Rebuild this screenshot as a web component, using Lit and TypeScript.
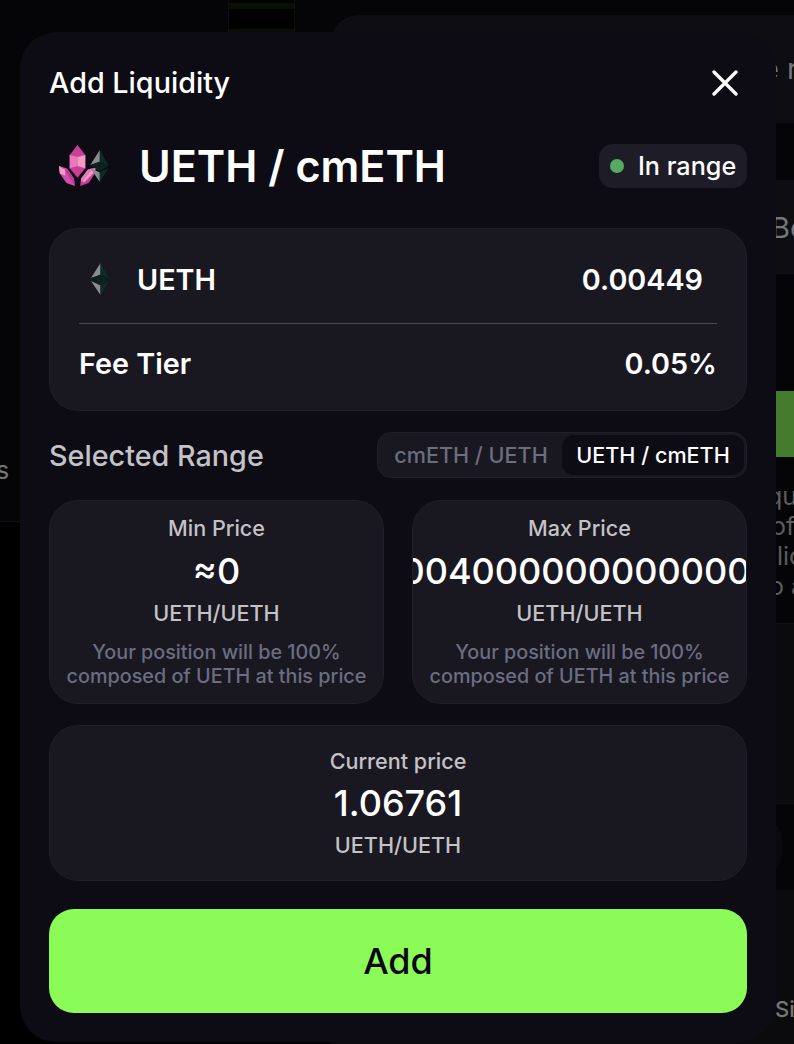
import { LitElement, html, css, svg } from "lit";
import { customElement } from "lit/decorators.js";

const diamond = svg`
  <polygon points="9.5,0 0,15 9.5,12" fill="#8b8c8d"/>
  <polygon points="9.5,0 18.5,15.5 9.5,12" fill="#0e2b27"/>
  <polygon points="0,15 9.5,11.5 18.5,15.5 9.5,21.5" fill="#0b211e"/>
  <polygon points="0,18 9.5,22.5 9.5,32" fill="#8b8c8d"/>
  <polygon points="9.5,22.5 18.5,18 9.5,32" fill="#0e2b27"/>`;

@customElement("pool-backdrop")
export class PoolBackdrop extends LitElement {
  static styles = css`
    :host { display: grid; grid-template-columns: 330px 1fr; height: 1044px; overflow: hidden; background: #000; color: #767678; font-size: 29px; line-height: 35px; }
    .left { display: flex; flex-direction: column; height: 521px; border-bottom: 1px solid #101013; background: #050507; }
    .candles { width: 65px; height: 100px; margin-left: 228px; border: solid #0e0e10; border-width: 0 1px; background: linear-gradient(#010101 3px, #081006 3px, #081006 9px, #010101 9px, #010101 29px, #081006 29px); }
    .foot { margin: 353px 0 0 -4px; font-size: 25px; }
    .right { display: flex; flex-direction: column; padding-top: 15px; background: #050507; }
    .box { background: #0e0e12; flex: none; box-sizing: border-box; padding-left: 432px; white-space: nowrap; }
    .one { height: 108px; border-radius: 29px 0 0 0; padding-top: 36px; }
    .two { height: 94px; margin-top: 57px; padding: 30px 0 0 441px; }
    .green { height: 66px; margin-top: 117px; background: #447b2c; flex: none; }
    .note { margin-top: 24px; height: 142px; padding-left: 439px; font-size: 25px; line-height: 30px; color: #5c5c5f; white-space: nowrap; box-sizing: border-box; flex: none; }
    .note div { height: 30px; }
    .three { height: 181px; background: #0b0b0e; border: solid #111114; border-width: 1px 0; }
    .pill { width: 452px; height: 50px; border-radius: 15px; background: #0a0a0d; margin: 18px 0; flex: none; }
    .four { height: 160px; background: #0b0b0e; padding: 102px 0 0 445px; font-size: 22px; font-weight: 500; }
    .n1 { margin-left: -2px; } .n2 { margin-left: 2px; } .n3 { margin-left: 8px; } .n4 { margin-left: 0; }
  `;
  render() {
    return html`
      <div class="left"><div class="candles"></div><div class="foot">s</div></div>
      <div class="right">
        <div class="box one">e r</div>
        <div class="box two">Be</div>
        <div class="green"></div>
        <div class="note"><div class="n1">qu</div><div class="n2">of</div><div class="n3">lic</div><div class="n4">o a</div></div>
        <div class="box three"></div>
        <div class="pill"></div>
        <div class="box four">Si</div>
      </div>`;
  }
}

@customElement("price-card")
export class PriceCard extends LitElement {
  static properties = { label: {}, value: {}, unit: {}, note: {} };
  declare label: string;
  declare value: string;
  declare unit: string;
  declare note: string;
  static styles = css`
    :host { display: flex; flex-direction: column; align-items: center; box-sizing: border-box; border: 1px solid #201f2a; border-radius: 29px; background: #191720; overflow: hidden; text-align: center; font-weight: 500; min-width: 0; }
    .label, .unit { font-size: 21.6px; line-height: 29px; color: #c3c2c6; }
    .value { font-size: 36px; line-height: 44px; margin: 6px 0 6px; color: #fff; white-space: nowrap; }
    :host(.wide) .value { padding-right: 7px; }
    :host(.current) .value { margin-top: 5px; }
    .note { font-size: 19.78px; line-height: 24.4px; margin-top: 12px; color: #6b6d80; white-space: pre-line; }
  `;
  render() {
    return html`
      <div class="label">${this.label}</div>
      <div class="value">${this.value}</div>
      <div class="unit">${this.unit}</div>
      ${this.note ? html`<div class="note">${this.note}</div>` : ""}`;
  }
}

@customElement("app-root")
export class AppRoot extends LitElement {
  static styles = css`
    :host { display: block; position: relative; height: 1044px; overflow: hidden; font-family: Inter, "Liberation Sans", sans-serif; color: #fff; }
    .modal { position: absolute; left: 20px; top: 32px; width: 756px; height: 1010px; box-sizing: border-box; padding: 29px; border-radius: 36px; background: #0d0b14; display: flex; flex-direction: column; }
    .row { display: flex; align-items: center; justify-content: space-between; }
    .head { height: 43px; font-size: 28.75px; font-weight: 500; }
    .close { width: 26px; height: 26px; margin-right: 9px; }
    .pair { height: 44px; margin-top: 40px; }
    .pair h1 { margin: 0 auto 0 0; font-size: 43.1px; font-weight: 600; line-height: 44px; }
    .logos { width: 50px; height: 42px; margin: 0 30px 0 10px; }
    .badge { display: flex; align-items: center; gap: 14px; width: 148px; height: 44px; box-sizing: border-box; padding: 0 0 1px 11px; border-radius: 14px; background: #1e1c27; font-size: 25.2px; font-weight: 500; white-space: nowrap; }
    .dot { width: 14px; height: 14px; border-radius: 50%; background: #58aa63; flex: none; }
    .card { margin-top: 40px; height: 183px; box-sizing: border-box; padding: 8px 29px; border: 1px solid #201f2a; border-radius: 29px; background: #191720; font-size: 28.75px; font-weight: 600; }
    .token { height: 86px; box-sizing: content-box; border-bottom: 1px solid #49494c; }
    .token > span { padding-bottom: 2px; }
    .token > span:last-child { margin-right: 14px; }
    .name { display: flex; align-items: center; }
    .coin { width: 19px; height: 32px; margin: 0 27px 0 12px; }
    .fee { height: 79px; }
    .range { margin-top: 21px; height: 46px; font-size: 28.75px; font-weight: 500; color: #c3c2c6; }
    .toggle { display: flex; width: 370px; height: 46px; box-sizing: border-box; padding: 2px; border: 1px solid #201f2a; border-radius: 14px; background: #191720; font-size: 21.6px; white-space: nowrap; }
    .tab { flex: 1; display: flex; align-items: center; justify-content: center; border-radius: 12px; color: #6b6d80; }
    .active { flex: none; width: 182px; color: #fff; background: #0d0b14; }
    .prices { display: grid; grid-template-columns: 1fr 1fr; gap: 28px; margin-top: 22px; height: 204px; }
    .prices price-card { padding-top: 13px; }
    .current { margin-top: 21px; height: 156px; padding-top: 21px; }
    .add { margin-top: 28px; height: 104px; border: 0; border-radius: 25px; background: #8bfb57; color: #0b0819; font: 500 36px Inter, sans-serif; }
  `;
  render() {
    const note = "Your position will be 100%\ncomposed of UETH at this price";
    return html`
      <pool-backdrop></pool-backdrop>
      <section class="modal">
        <div class="row head">
          <span>Add Liquidity</span>
          <svg class="close" viewBox="0 0 26 26" fill="none" stroke="#fff" stroke-width="3.3" stroke-linecap="round"><path d="M2 2 24 24M24 2 2 24"/></svg>
        </div>
        <div class="row pair">
          <svg class="logos" viewBox="0 0 50 42">
            <polygon points="18.5,0 26.3,10 26.3,23.3 18.5,32.7 10.7,23.3 10.7,10" fill="#c93e98"/>
            <polygon points="10.7,10 18.5,12 18.5,21 10.7,23.3" fill="#e479be"/>
            <polygon points="18.5,12 26.3,10 26.3,23.3 18.5,21" fill="#f19cc0"/>
            <polygon points="0,21 8,23.6 15,33.5 15.7,41 7.5,38 0.8,28.5" fill="#cf4fae"/>
            <polygon points="0,21 6.2,25 6.2,30.5 0.8,28.5" fill="#f19cc0"/>
            <polygon points="6.2,25 8,23.6 15,33.5 15.7,41" fill="#b93a92"/>
            <polygon points="36.8,22.8 36,28.5 29.5,38 21.3,41 22,33.5 29,24.5" fill="#c93e98"/>
            <polygon points="29,24.5 36.8,22.8 31,26.5 22,37.5 22,33.5" fill="#e479be"/>
            <polygon points="36.8,22.8 34.5,28 25,37.5 23.5,36 31,26.5" fill="#f19cc0"/>
            <g transform="translate(31.3 5)">${diamond}</g>
          </svg>
          <h1>UETH / cmETH</h1>
          <div class="badge"><i class="dot"></i>In range</div>
        </div>
        <div class="card">
          <div class="row token"><span class="name"><svg class="coin" viewBox="0 0 19 32">${diamond}</svg>UETH</span><span>0.00449</span></div>
          <div class="row fee"><span>Fee Tier</span><span>0.05%</span></div>
        </div>
        <div class="row range">
          <span>Selected Range</span>
          <div class="toggle"><div class="tab">cmETH / UETH</div><div class="tab active">UETH / cmETH</div></div>
        </div>
        <div class="prices">
          <price-card label="Min Price" value="≈0" unit="UETH/UETH" .note=${note}></price-card>
          <price-card class="wide" label="Max Price" value="004000000000000" unit="UETH/UETH" .note=${note}></price-card>
        </div>
        <price-card class="current" label="Current price" value="1.06761" unit="UETH/UETH"></price-card>
        <button class="add">Add</button>
      </section>`;
  }
}
